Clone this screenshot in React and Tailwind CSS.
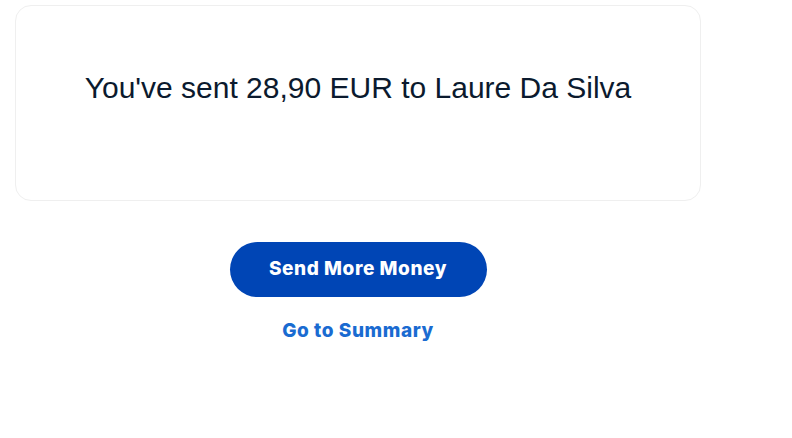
export default function App() {
  return (
    <div className="w-[792px] h-[438px] bg-white">
      <div className="pt-[5px] pl-[15px] w-[701px]">
        <div className="h-[196px] rounded-[16px] border border-[#efefef] flex justify-center pt-[65px]">
          <p className="text-[30px] leading-[34px] text-[#0b1a2e] font-['Liberation_Sans',sans-serif]">
            You've sent 28,90 EUR to Laure Da Silva
          </p>
        </div>
        <div className="flex flex-col items-center mt-[41px]">
          <button className="w-[257px] h-[55px] rounded-full bg-[#0045b5] text-white text-[19px] tracking-[0.03em] font-extrabold font-['Inter',sans-serif]">
            Send More Money
          </button>
          <a className="mt-[22px] text-[19px] leading-[24px] tracking-[0.03em] font-extrabold text-[#1a6bd1] font-['Inter',sans-serif]">
            Go to Summary
          </a>
        </div>
      </div>
    </div>
  );
}
